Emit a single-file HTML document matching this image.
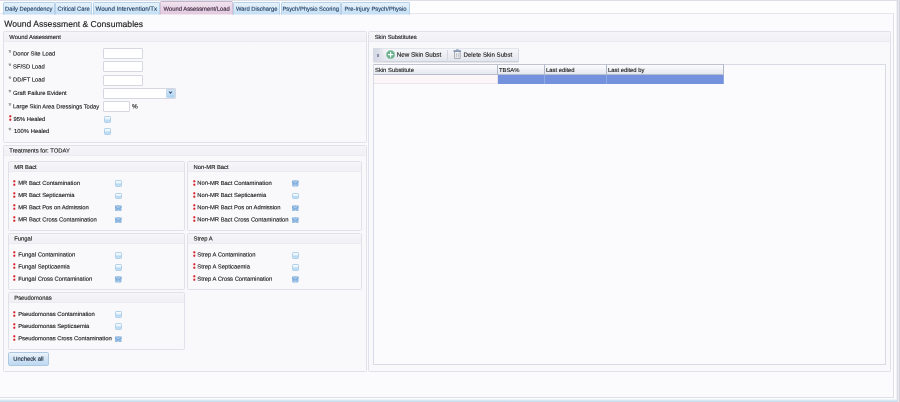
<!DOCTYPE html><html><head><meta charset="utf-8"><title>Wound Assessment &amp; Consumables</title><style>
*{box-sizing:border-box;margin:0;padding:0}
html,body{width:900px;height:402px;overflow:hidden;background:#fdfdfe;font-family:"Liberation Sans",sans-serif;font-size:5.85px;color:#161616;-webkit-text-stroke:0.12px #161616}
.abs{position:absolute}
.topbar{left:0;top:0;width:900px;height:1px;background:#dcdfe5}
.main{left:0;top:13px;width:894px;height:385px;background:#fbfbfd;border:1px solid #dfe0e7;border-top-color:#e6e7ec;border-left:none}
.tab{position:absolute;top:2.3px;height:12.9px;background:linear-gradient(#e6f2fb 0%,#d6e9f8 55%,#c4def4 100%);background-clip:padding-box;border:1px solid #b7d1e8;border-bottom:1px solid #e0edf8;border-radius:1.5px 1.5px 0 0}
.tab.act{top:0.5px;height:14.7px;background:linear-gradient(#f1e2ed 0%,#ead5e6 55%,#e3cae0 100%);background-clip:padding-box;border-color:#d6c0d6;border-top-color:#c6b4cf;border-bottom-color:#f1e6f0}
.tt{color:#1c3a5e;-webkit-text-stroke-color:#1c3a5e}
.tt.act{color:#33203a;-webkit-text-stroke-color:#33203a}
.grp{position:absolute;border:1px solid #e1e2e9;border-radius:1.5px;background:#f9f9fb}
.grp>.hd{position:absolute;left:0;right:0;top:0;height:10px;background:linear-gradient(#f6f6f9,#f0f0f5);border-bottom:1px solid #ebecf1}
.lbl{position:absolute;white-space:nowrap;line-height:8px;height:8px}
.inp{position:absolute;height:11px;background:#fff;border:1px solid #d5d8e1;border-radius:1px}
.cb{position:absolute;width:6.6px;height:6.5px;border:1px solid #b1d0ea;border-radius:1.2px;background:linear-gradient(#f7fbfe 0%,#e6f2fb 45%,#b4d7f1 56%,#c4e0f5 100%)}
.cb.dk{border:none;background:none}
.cb.dk svg{position:absolute;left:0;top:0;width:6.6px;height:6.5px}
.ast{color:#777;-webkit-text-stroke-color:#777}
.req{position:absolute;width:2.8px;height:6.2px;overflow:visible}
</style></head><body><div id="app" style="position:absolute;left:0;top:0;width:900px;height:402px;will-change:transform">
<div class="abs topbar"></div><div class="abs main"></div>
<div class="tab" style="left:2.6px;width:52.199999999999996px"></div>
<span class="lbl tt" style="left:2px;top:4px;transform:translate(0.6px,0.797px) rotate(0.05deg);width:52.2px;text-align:center">Daily Dependency</span>
<div class="tab" style="left:55.2px;width:37.0px"></div>
<span class="lbl tt" style="left:55px;top:4px;transform:translate(0.2px,0.797px) rotate(0.05deg);width:37.0px;text-align:center">Critical Care</span>
<div class="tab" style="left:92.6px;width:67.4px"></div>
<span class="lbl tt" style="left:92px;top:4px;transform:translate(0.6px,0.797px) rotate(0.05deg);font-size:6.15px;width:67.4px;text-align:center">Wound Intervention/Tx</span>
<div class="tab act" style="left:160px;width:73.30000000000001px"></div>
<span class="lbl tt act" style="left:160px;top:4px;transform:translate(0px,0.797px) rotate(0.05deg);width:73.3px;text-align:center">Wound Assessment/Load</span>
<div class="tab" style="left:233.3px;width:46.89999999999998px"></div>
<span class="lbl tt" style="left:233px;top:4px;transform:translate(0.3px,0.797px) rotate(0.05deg);width:46.9px;text-align:center">Ward Discharge</span>
<div class="tab" style="left:280.6px;width:60.099999999999966px"></div>
<span class="lbl tt" style="left:280px;top:4px;transform:translate(0.6px,0.797px) rotate(0.05deg);width:60.1px;text-align:center">Psych/Physio Scoring</span>
<div class="tab" style="left:341.1px;width:68.69999999999999px"></div>
<span class="lbl tt" style="left:341px;top:4px;transform:translate(0.1px,0.797px) rotate(0.05deg);width:68.7px;text-align:center">Pre-Injury Psych/Physio</span>
<span class="lbl" style="left:4px;top:19px;transform:translate(0.3px,0.896px) rotate(0.05deg);font-size:8.6px;line-height:8px">Wound Assessment &amp; Consumables</span>
<div class="grp" style="left:3px;top:31px;width:364px;height:111.5px"><div class="hd" style="height:10px"></div></div>
<span class="lbl" style="left:9px;top:32px;transform:translate(0.3px,0.997px) rotate(0.05deg)">Wound Assessment</span>
<span class="lbl ast" style="left:8px;top:48px;transform:translate(0.4px,0.797px) rotate(0.05deg);font-size:7px">*</span>
<span class="lbl" style="left:13px;top:49px;transform:translate(0px,0.397px) rotate(0.05deg)">Donor Site Load</span>
<span class="lbl ast" style="left:8px;top:61px;transform:translate(0.4px,0.897px) rotate(0.05deg);font-size:7px">*</span>
<span class="lbl" style="left:13px;top:62px;transform:translate(0px,0.497px) rotate(0.05deg)">SF/SD Load</span>
<span class="lbl ast" style="left:8px;top:74px;transform:translate(0.4px,0.996px) rotate(0.05deg);font-size:7px">*</span>
<span class="lbl" style="left:13px;top:75px;transform:translate(0px,0.597px) rotate(0.05deg)">DD/FT Load</span>
<span class="lbl ast" style="left:8px;top:88px;transform:translate(0.4px,0.397px) rotate(0.05deg);font-size:7px">*</span>
<span class="lbl" style="left:13px;top:88px;transform:translate(0px,0.997px) rotate(0.05deg)">Graft Failure Evident</span>
<span class="lbl ast" style="left:8px;top:101px;transform:translate(0.4px,0.797px) rotate(0.05deg);font-size:7px">*</span>
<span class="lbl" style="left:13px;top:102px;transform:translate(0px,0.397px) rotate(0.05deg)">Large Skin Area Dressings Today</span>
<svg class="req" style="left:8.9px;top:115.4px" viewBox="0 0 28 62"><circle cx="13" cy="13" r="13.5" fill="#f3b4b8"/><circle cx="13" cy="13" r="9.5" fill="#d3222b"/><circle cx="13" cy="47" r="13.5" fill="#f3b4b8"/><circle cx="13" cy="47" r="9.5" fill="#d3222b"/></svg>
<span class="lbl" style="left:13px;top:114px;transform:translate(0.5px,0.997px) rotate(0.05deg)">95% Healed</span>
<span class="lbl ast" style="left:8px;top:126px;transform:translate(0.4px,0.397px) rotate(0.05deg);font-size:7px">*</span>
<span class="lbl" style="left:14px;top:126px;transform:translate(0.1px,0.997px) rotate(0.05deg)">100% Healed</span>
<div class="inp" style="left:103px;top:48px;width:40px"></div>
<div class="inp" style="left:103px;top:61px;width:40px"></div>
<div class="inp" style="left:103px;top:75px;width:40px"></div>
<div class="inp" style="left:103px;top:88px;width:73px"></div>
<div class="abs" style="left:166px;top:89px;width:9px;height:9px;border:1px solid #c2d8ed;border-radius:1px;background:linear-gradient(#d6e7f6 0%,#c3def4 50%,#a9d3f1 100%)"><svg class="abs" style="left:1.3px;top:0.4px" width="5" height="5" viewBox="0 0 5 5"><path d="M1 1.5 L2.5 3.2 L4 1.5" fill="none" stroke="#34537c" stroke-width="1.05"/></svg></div>
<div class="inp" style="left:103px;top:101px;width:27px"></div>
<span class="lbl" style="left:132px;top:102px;transform:translate(0px,0.597px) rotate(0.05deg);font-size:6.4px">%</span>
<div class="cb" style="left:104.1px;top:116.3px"></div>
<div class="cb" style="left:104.1px;top:128.3px"></div>
<div class="grp" style="left:3px;top:144.8px;width:364px;height:227.4px"><div class="hd" style="height:10.4px"></div></div>
<span class="lbl" style="left:9px;top:146px;transform:translate(0.3px,0.597px) rotate(0.05deg)">Treatments for: TODAY</span>
<div class="grp" style="left:8px;top:161px;width:176.5px;height:69.8px"><div class="hd" style="height:10px"></div></div>
<span class="lbl" style="left:14px;top:162px;transform:translate(0.3px,0.997px) rotate(0.05deg)">MR Bact</span>
<svg class="req" style="left:13.399999999999999px;top:179.6px" viewBox="0 0 28 62"><circle cx="13" cy="13" r="13.5" fill="#f3b4b8"/><circle cx="13" cy="13" r="9.5" fill="#d3222b"/><circle cx="13" cy="47" r="13.5" fill="#f3b4b8"/><circle cx="13" cy="47" r="9.5" fill="#d3222b"/></svg>
<span class="lbl" style="left:18px;top:178px;transform:translate(0.2px,0.897px) rotate(0.05deg)">MR Bact Contamination</span>
<div class="cb" style="left:115.3px;top:180.3px"></div>
<svg class="req" style="left:13.399999999999999px;top:191.79999999999998px" viewBox="0 0 28 62"><circle cx="13" cy="13" r="13.5" fill="#f3b4b8"/><circle cx="13" cy="13" r="9.5" fill="#d3222b"/><circle cx="13" cy="47" r="13.5" fill="#f3b4b8"/><circle cx="13" cy="47" r="9.5" fill="#d3222b"/></svg>
<span class="lbl" style="left:18px;top:191px;transform:translate(0.2px,0.097px) rotate(0.05deg)">MR Bact Septicaemia</span>
<div class="cb" style="left:115.3px;top:192.5px"></div>
<svg class="req" style="left:13.399999999999999px;top:203.89999999999998px" viewBox="0 0 28 62"><circle cx="13" cy="13" r="13.5" fill="#f3b4b8"/><circle cx="13" cy="13" r="9.5" fill="#d3222b"/><circle cx="13" cy="47" r="13.5" fill="#f3b4b8"/><circle cx="13" cy="47" r="9.5" fill="#d3222b"/></svg>
<span class="lbl" style="left:18px;top:203px;transform:translate(0.2px,0.197px) rotate(0.05deg)">MR Bact Pos on Admission</span>
<div class="cb dk" style="left:115.3px;top:204.6px"><svg viewBox="0 0 66 65" preserveAspectRatio="none"><rect x="1" y="3" width="64" height="61" rx="8" fill="#93bbe2"/><path d="M1 6 L33 34 L65 6 V24 L33 46 L1 24Z" fill="#79a7d8"/><path d="M14 64 L33 44 L52 64Z" fill="#b9d6f0"/><path d="M4 4 L33 30 L62 4" fill="none" stroke="#d3e5f6" stroke-width="6"/></svg></div>
<svg class="req" style="left:13.399999999999999px;top:216.1px" viewBox="0 0 28 62"><circle cx="13" cy="13" r="13.5" fill="#f3b4b8"/><circle cx="13" cy="13" r="9.5" fill="#d3222b"/><circle cx="13" cy="47" r="13.5" fill="#f3b4b8"/><circle cx="13" cy="47" r="9.5" fill="#d3222b"/></svg>
<span class="lbl" style="left:18px;top:215px;transform:translate(0.2px,0.397px) rotate(0.05deg)">MR Bact Cross Contamination</span>
<div class="cb dk" style="left:115.3px;top:216.8px"><svg viewBox="0 0 66 65" preserveAspectRatio="none"><rect x="1" y="3" width="64" height="61" rx="8" fill="#93bbe2"/><path d="M1 6 L33 34 L65 6 V24 L33 46 L1 24Z" fill="#79a7d8"/><path d="M14 64 L33 44 L52 64Z" fill="#b9d6f0"/><path d="M4 4 L33 30 L62 4" fill="none" stroke="#d3e5f6" stroke-width="6"/></svg></div>
<div class="grp" style="left:187.3px;top:161px;width:174.5px;height:69.8px"><div class="hd" style="height:10px"></div></div>
<span class="lbl" style="left:193px;top:162px;transform:translate(0.6px,0.997px) rotate(0.05deg)">Non-MR Bact</span>
<svg class="req" style="left:192.5px;top:179.6px" viewBox="0 0 28 62"><circle cx="13" cy="13" r="13.5" fill="#f3b4b8"/><circle cx="13" cy="13" r="9.5" fill="#d3222b"/><circle cx="13" cy="47" r="13.5" fill="#f3b4b8"/><circle cx="13" cy="47" r="9.5" fill="#d3222b"/></svg>
<span class="lbl" style="left:197px;top:178px;transform:translate(0.3px,0.897px) rotate(0.05deg)">Non-MR Bact Contamination</span>
<div class="cb dk" style="left:292px;top:180.3px"><svg viewBox="0 0 66 65" preserveAspectRatio="none"><rect x="1" y="3" width="64" height="61" rx="8" fill="#93bbe2"/><path d="M1 6 L33 34 L65 6 V24 L33 46 L1 24Z" fill="#79a7d8"/><path d="M14 64 L33 44 L52 64Z" fill="#b9d6f0"/><path d="M4 4 L33 30 L62 4" fill="none" stroke="#d3e5f6" stroke-width="6"/></svg></div>
<svg class="req" style="left:192.5px;top:191.79999999999998px" viewBox="0 0 28 62"><circle cx="13" cy="13" r="13.5" fill="#f3b4b8"/><circle cx="13" cy="13" r="9.5" fill="#d3222b"/><circle cx="13" cy="47" r="13.5" fill="#f3b4b8"/><circle cx="13" cy="47" r="9.5" fill="#d3222b"/></svg>
<span class="lbl" style="left:197px;top:191px;transform:translate(0.3px,0.097px) rotate(0.05deg)">Non-MR Bact Septicaemia</span>
<div class="cb" style="left:292px;top:192.5px"></div>
<svg class="req" style="left:192.5px;top:203.89999999999998px" viewBox="0 0 28 62"><circle cx="13" cy="13" r="13.5" fill="#f3b4b8"/><circle cx="13" cy="13" r="9.5" fill="#d3222b"/><circle cx="13" cy="47" r="13.5" fill="#f3b4b8"/><circle cx="13" cy="47" r="9.5" fill="#d3222b"/></svg>
<span class="lbl" style="left:197px;top:203px;transform:translate(0.3px,0.197px) rotate(0.05deg)">Non-MR Bact Pos on Admission</span>
<div class="cb dk" style="left:292px;top:204.6px"><svg viewBox="0 0 66 65" preserveAspectRatio="none"><rect x="1" y="3" width="64" height="61" rx="8" fill="#93bbe2"/><path d="M1 6 L33 34 L65 6 V24 L33 46 L1 24Z" fill="#79a7d8"/><path d="M14 64 L33 44 L52 64Z" fill="#b9d6f0"/><path d="M4 4 L33 30 L62 4" fill="none" stroke="#d3e5f6" stroke-width="6"/></svg></div>
<svg class="req" style="left:192.5px;top:216.1px" viewBox="0 0 28 62"><circle cx="13" cy="13" r="13.5" fill="#f3b4b8"/><circle cx="13" cy="13" r="9.5" fill="#d3222b"/><circle cx="13" cy="47" r="13.5" fill="#f3b4b8"/><circle cx="13" cy="47" r="9.5" fill="#d3222b"/></svg>
<span class="lbl" style="left:197px;top:215px;transform:translate(0.3px,0.397px) rotate(0.05deg)">Non-MR Bact Cross Contamination</span>
<div class="cb dk" style="left:292px;top:216.8px"><svg viewBox="0 0 66 65" preserveAspectRatio="none"><rect x="1" y="3" width="64" height="61" rx="8" fill="#93bbe2"/><path d="M1 6 L33 34 L65 6 V24 L33 46 L1 24Z" fill="#79a7d8"/><path d="M14 64 L33 44 L52 64Z" fill="#b9d6f0"/><path d="M4 4 L33 30 L62 4" fill="none" stroke="#d3e5f6" stroke-width="6"/></svg></div>
<div class="grp" style="left:8px;top:233px;width:176.5px;height:57px"><div class="hd" style="height:10px"></div></div>
<span class="lbl" style="left:14px;top:234px;transform:translate(0.3px,0.597px) rotate(0.05deg)">Fungal</span>
<svg class="req" style="left:13.399999999999999px;top:251.29999999999998px" viewBox="0 0 28 62"><circle cx="13" cy="13" r="13.5" fill="#f3b4b8"/><circle cx="13" cy="13" r="9.5" fill="#d3222b"/><circle cx="13" cy="47" r="13.5" fill="#f3b4b8"/><circle cx="13" cy="47" r="9.5" fill="#d3222b"/></svg>
<span class="lbl" style="left:18px;top:250px;transform:translate(0.2px,0.597px) rotate(0.05deg)">Fungal Contamination</span>
<div class="cb" style="left:115.3px;top:252.0px"></div>
<svg class="req" style="left:13.399999999999999px;top:263.3px" viewBox="0 0 28 62"><circle cx="13" cy="13" r="13.5" fill="#f3b4b8"/><circle cx="13" cy="13" r="9.5" fill="#d3222b"/><circle cx="13" cy="47" r="13.5" fill="#f3b4b8"/><circle cx="13" cy="47" r="9.5" fill="#d3222b"/></svg>
<span class="lbl" style="left:18px;top:262px;transform:translate(0.2px,0.597px) rotate(0.05deg)">Fungal Septicaemia</span>
<div class="cb" style="left:115.3px;top:264.0px"></div>
<svg class="req" style="left:13.399999999999999px;top:275.4px" viewBox="0 0 28 62"><circle cx="13" cy="13" r="13.5" fill="#f3b4b8"/><circle cx="13" cy="13" r="9.5" fill="#d3222b"/><circle cx="13" cy="47" r="13.5" fill="#f3b4b8"/><circle cx="13" cy="47" r="9.5" fill="#d3222b"/></svg>
<span class="lbl" style="left:18px;top:274px;transform:translate(0.2px,0.697px) rotate(0.05deg)">Fungal Cross Contamination</span>
<div class="cb dk" style="left:115.3px;top:276.09999999999997px"><svg viewBox="0 0 66 65" preserveAspectRatio="none"><rect x="1" y="3" width="64" height="61" rx="8" fill="#93bbe2"/><path d="M1 6 L33 34 L65 6 V24 L33 46 L1 24Z" fill="#79a7d8"/><path d="M14 64 L33 44 L52 64Z" fill="#b9d6f0"/><path d="M4 4 L33 30 L62 4" fill="none" stroke="#d3e5f6" stroke-width="6"/></svg></div>
<div class="grp" style="left:187.3px;top:233px;width:174.5px;height:57px"><div class="hd" style="height:10px"></div></div>
<span class="lbl" style="left:193px;top:234px;transform:translate(0.6px,0.597px) rotate(0.05deg)">Strep A</span>
<svg class="req" style="left:192.5px;top:251.29999999999998px" viewBox="0 0 28 62"><circle cx="13" cy="13" r="13.5" fill="#f3b4b8"/><circle cx="13" cy="13" r="9.5" fill="#d3222b"/><circle cx="13" cy="47" r="13.5" fill="#f3b4b8"/><circle cx="13" cy="47" r="9.5" fill="#d3222b"/></svg>
<span class="lbl" style="left:197px;top:250px;transform:translate(0.3px,0.597px) rotate(0.05deg)">Strep A Contamination</span>
<div class="cb" style="left:292px;top:252.0px"></div>
<svg class="req" style="left:192.5px;top:263.3px" viewBox="0 0 28 62"><circle cx="13" cy="13" r="13.5" fill="#f3b4b8"/><circle cx="13" cy="13" r="9.5" fill="#d3222b"/><circle cx="13" cy="47" r="13.5" fill="#f3b4b8"/><circle cx="13" cy="47" r="9.5" fill="#d3222b"/></svg>
<span class="lbl" style="left:197px;top:262px;transform:translate(0.3px,0.597px) rotate(0.05deg)">Strep A Septicaemia</span>
<div class="cb" style="left:292px;top:264.0px"></div>
<svg class="req" style="left:192.5px;top:275.4px" viewBox="0 0 28 62"><circle cx="13" cy="13" r="13.5" fill="#f3b4b8"/><circle cx="13" cy="13" r="9.5" fill="#d3222b"/><circle cx="13" cy="47" r="13.5" fill="#f3b4b8"/><circle cx="13" cy="47" r="9.5" fill="#d3222b"/></svg>
<span class="lbl" style="left:197px;top:274px;transform:translate(0.3px,0.697px) rotate(0.05deg)">Strep A Cross Contamination</span>
<div class="cb dk" style="left:292px;top:276.09999999999997px"><svg viewBox="0 0 66 65" preserveAspectRatio="none"><rect x="1" y="3" width="64" height="61" rx="8" fill="#93bbe2"/><path d="M1 6 L33 34 L65 6 V24 L33 46 L1 24Z" fill="#79a7d8"/><path d="M14 64 L33 44 L52 64Z" fill="#b9d6f0"/><path d="M4 4 L33 30 L62 4" fill="none" stroke="#d3e5f6" stroke-width="6"/></svg></div>
<div class="grp" style="left:8px;top:292.3px;width:176.5px;height:57.4px"><div class="hd" style="height:10px"></div></div>
<span class="lbl" style="left:14px;top:293px;transform:translate(0.3px,0.697px) rotate(0.05deg)">Pseudomonas</span>
<svg class="req" style="left:13.399999999999999px;top:310.75px" viewBox="0 0 28 62"><circle cx="13" cy="13" r="13.5" fill="#f3b4b8"/><circle cx="13" cy="13" r="9.5" fill="#d3222b"/><circle cx="13" cy="47" r="13.5" fill="#f3b4b8"/><circle cx="13" cy="47" r="9.5" fill="#d3222b"/></svg>
<span class="lbl" style="left:18px;top:310px;transform:translate(0.2px,0.047px) rotate(0.05deg)">Pseudomonas Contamination</span>
<div class="cb" style="left:115.3px;top:311.45px"></div>
<svg class="req" style="left:13.399999999999999px;top:322.7px" viewBox="0 0 28 62"><circle cx="13" cy="13" r="13.5" fill="#f3b4b8"/><circle cx="13" cy="13" r="9.5" fill="#d3222b"/><circle cx="13" cy="47" r="13.5" fill="#f3b4b8"/><circle cx="13" cy="47" r="9.5" fill="#d3222b"/></svg>
<span class="lbl" style="left:18px;top:321px;transform:translate(0.2px,0.997px) rotate(0.05deg)">Pseudomonas Septicaemia</span>
<div class="cb" style="left:115.3px;top:323.4px"></div>
<svg class="req" style="left:13.399999999999999px;top:334.9px" viewBox="0 0 28 62"><circle cx="13" cy="13" r="13.5" fill="#f3b4b8"/><circle cx="13" cy="13" r="9.5" fill="#d3222b"/><circle cx="13" cy="47" r="13.5" fill="#f3b4b8"/><circle cx="13" cy="47" r="9.5" fill="#d3222b"/></svg>
<span class="lbl" style="left:18px;top:334px;transform:translate(0.2px,0.197px) rotate(0.05deg)">Pseudomonas Cross Contamination</span>
<div class="cb dk" style="left:115.3px;top:335.59999999999997px"><svg viewBox="0 0 66 65" preserveAspectRatio="none"><rect x="1" y="3" width="64" height="61" rx="8" fill="#93bbe2"/><path d="M1 6 L33 34 L65 6 V24 L33 46 L1 24Z" fill="#79a7d8"/><path d="M14 64 L33 44 L52 64Z" fill="#b9d6f0"/><path d="M4 4 L33 30 L62 4" fill="none" stroke="#d3e5f6" stroke-width="6"/></svg></div>
<div class="abs" style="left:7.8px;top:352.1px;width:41.2px;height:13.5px;border:1px solid #afc8e1;border-radius:1.8px;background:linear-gradient(#eaf3fb 0%,#d5e6f6 45%,#bcd8f1 100%)"></div>
<span class="lbl" style="left:7px;top:354px;transform:translate(0.8px,0.797px) rotate(0.05deg);width:41.2px;text-align:center;color:#10213c">Uncheck all</span>
<div class="grp" style="left:368px;top:31px;width:523px;height:341px"><div class="hd" style="height:10px"></div></div>
<span class="lbl" style="left:374px;top:32px;transform:translate(0.7px,0.897px) rotate(0.05deg)">Skin Substitutes</span>
<div class="abs" style="left:373.4px;top:48px;width:146px;height:14px;background:linear-gradient(#f5f6f9,#e4e6ee);border:1px solid #e3e5ec;border-bottom-color:#cdd1dc;border-right-color:#d6d9e3;border-radius:1.5px;box-shadow:0 1px 0 rgba(205,209,220,0.5)"></div>
<div class="abs" style="left:373.4px;top:48px;width:12px;height:14px;background:linear-gradient(90deg,rgba(212,216,227,1) 0%,rgba(218,221,231,0.9) 50%,rgba(230,232,239,0) 100%);border-radius:1.5px 0 0 1.5px"></div>
<div class="abs" style="left:377.2px;top:54.2px;width:1.8px;height:2.8px;background:#8b92a8"></div>
<svg class="abs" style="left:385.8px;top:50.1px" width="9.2" height="9.2" viewBox="0 0 18 18"><circle cx="9" cy="9" r="8.2" fill="#66b08b" stroke="#93c9ab" stroke-width="1.4"/><path d="M9 4.4V13.6M4.4 9H13.6" stroke="#fff" stroke-width="2.3" stroke-linecap="round"/></svg>
<span class="lbl" style="left:396px;top:50px;transform:translate(0.7px,0.797px) rotate(0.05deg);font-size:6.3px">New Skin Subst</span>
<div class="abs" style="left:446.5px;top:49.5px;width:1px;height:10.5px;background:#d4d8e2"></div>
<svg class="abs" style="left:452.6px;top:49.4px" width="8.8" height="10" viewBox="0 0 17.6 20"><rect x="3.4" y="5.2" width="10.8" height="13.4" fill="#f6f6f8" stroke="#8c8f99" stroke-width="1.5"/><rect x="0.8" y="2.4" width="16" height="3" rx="0.6" fill="#7d8fae"/><rect x="6" y="0.6" width="5.6" height="2.2" fill="#93a1ba"/><path d="M6.9 8V16.4M10.7 8V16.4" stroke="#a9adb8" stroke-width="1.5"/></svg>
<span class="lbl" style="left:463px;top:50px;transform:translate(0.5px,0.797px) rotate(0.05deg);font-size:6.15px">Delete Skin Subst</span>
<div class="abs" style="left:373.4px;top:64.3px;width:512.6px;height:301px;border:1px solid #d9dbe4;background:#fbfbfd"></div>
<div class="abs" style="left:374px;top:64px;width:124px;height:11px;background:linear-gradient(#fcfcfe,#e6e8f0);border-top:1px solid #c0c4d1;border-right:1px solid #b2b8c8;border-bottom:1px solid #b9bece"></div>
<span class="lbl" style="left:375px;top:66px;transform:translate(0.0px,0.097px) rotate(0.05deg)">Skin Substitute</span>
<div class="abs" style="left:374px;top:75px;width:124px;height:9px;background:#fcf6f8;border-right:1px solid #e9e4ea;border-bottom:1px solid #e8e8ee"></div>
<div class="abs" style="left:498px;top:64px;width:47px;height:11px;background:linear-gradient(#fcfcfe,#e6e8f0);border-top:1px solid #c0c4d1;border-right:1px solid #b2b8c8;border-bottom:1px solid #b9bece"></div>
<span class="lbl" style="left:499px;top:66px;transform:translate(0.0px,0.097px) rotate(0.05deg)">TBSA%</span>
<div class="abs" style="left:498px;top:75px;width:47px;height:9px;background:#7391dc;border-right:1px solid #90a8e5"></div>
<div class="abs" style="left:545px;top:64px;width:62px;height:11px;background:linear-gradient(#fcfcfe,#e6e8f0);border-top:1px solid #c0c4d1;border-right:1px solid #b2b8c8;border-bottom:1px solid #b9bece"></div>
<span class="lbl" style="left:546px;top:66px;transform:translate(0.0px,0.097px) rotate(0.05deg)">Last edited</span>
<div class="abs" style="left:545px;top:75px;width:62px;height:9px;background:#7391dc;border-right:1px solid #90a8e5"></div>
<div class="abs" style="left:607px;top:64px;width:117px;height:11px;background:linear-gradient(#fcfcfe,#e6e8f0);border-top:1px solid #c0c4d1;border-right:1px solid #b2b8c8;border-bottom:1px solid #b9bece"></div>
<span class="lbl" style="left:608px;top:66px;transform:translate(0.0px,0.097px) rotate(0.05deg)">Last edited by</span>
<div class="abs" style="left:607px;top:75px;width:117px;height:9px;background:#7391dc;border-right:1px solid #90a8e5"></div>
<div class="abs" style="left:896px;top:1px;width:1px;height:401px;background:#eff1f5"></div>
<div class="abs" style="left:897px;top:1px;width:1px;height:401px;background:#d9dce5"></div>
<div class="abs" style="left:898px;top:1px;width:1px;height:401px;background:#e6e8ee"></div>
<div class="abs" style="left:899px;top:1px;width:1px;height:401px;background:#d3d6df"></div>
<div class="abs" style="left:0;top:399px;width:897px;height:3px;background:linear-gradient(#f6fafd 0%,#d9e9f4 50%,#b9d5e8 100%)"></div>
</div></body></html>
